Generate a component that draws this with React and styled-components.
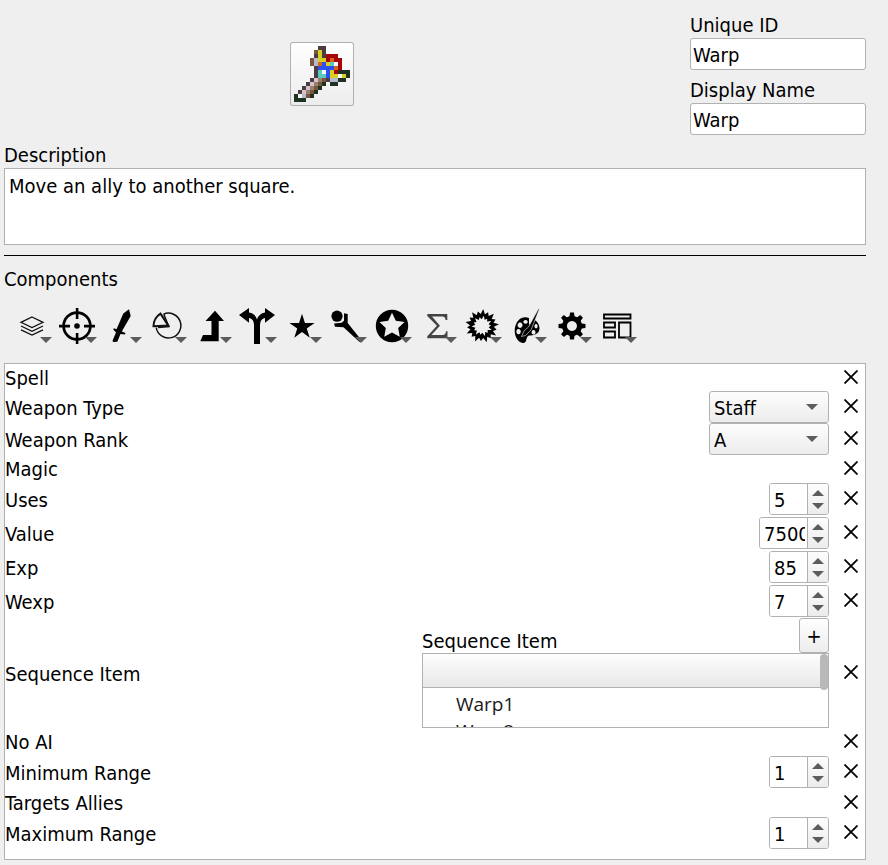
import React, { useState } from "react";
import styled, { createGlobalStyle } from "styled-components";

const GlobalStyle = createGlobalStyle`
  * { box-sizing: border-box; }
  body {
    margin: 0;
    background: #efefef;
    color: #000;
    font: 20px/25px "DejaVu Sans Condensed", "DejaVu Sans", sans-serif;
  }
  button, input, select, textarea { font: inherit; color: inherit; }
`;

const Page = styled.main`
  padding: 13px 22px 5px 4px;
`;

const Header = styled.header`
  display: grid;
  grid-template-columns: 1fr 176px;
  column-gap: 50px;
  align-items: start;
`;

const SpriteButton = styled.button`
  justify-self: center;
  width: 64px;
  height: 64px;
  margin-top: 29px;
  padding: 0;
  border: 0;
  border-radius: 3px;
  box-shadow: inset 0 0 0 1px #b1b1b1;
  background: linear-gradient(#fff, #ececec);
  svg { display: block; width: 100%; height: 100%; }
`;

const Names = styled.div`
  display: flex;
  flex-direction: column;
  gap: 8px;
`;

const Field = styled.label`
  display: block;
  margin-top: ${(p) => (p.$spaced ? "8px" : "0")};
`;

const TextInput = styled.input`
  display: block;
  width: 100%;
  height: 32px;
  padding: 2px 2px 0;
  border: 1px solid #b1b1b1;
  border-radius: 3px;
  background: #fff;
`;

const TextArea = styled.textarea`
  display: block;
  width: 100%;
  height: 77px;
  padding: 5px 4px;
  border: 1px solid #b1b1b1;
  background: #fff;
  resize: none;
`;

const Divider = styled.hr`
  height: 1px;
  margin: 10px 0 11px;
  border: 0;
  background: #000;
`;

const Heading = styled.h2`
  margin: 0;
  font-size: 20px;
  font-weight: 400;
`;

const Toolbar = styled.div`
  display: flex;
  padding: 7px 6px 10px;
`;

const ToolButton = styled.button`
  position: relative;
  width: 45px;
  height: 54px;
  padding: 0 5px 0 4px;
  border: 0;
  background: none;
  svg { display: block; }
`;

const ToolCaret = styled.span`
  position: absolute;
  right: 3px;
  bottom: 10px;
  border: solid transparent;
  border-width: 6px 6px 0;
  border-top-color: #5c5c5c;
`;

const List = styled.ul`
  margin: 0;
  padding: 0 0 9px;
  border: 1px solid #b1b1b1;
  background: #fff;
  list-style: none;
`;

const Row = styled.li`
  display: flex;
  align-items: center;
  min-height: ${(p) => p.$height}px;
`;

const RowLabel = styled.label`
  flex: 1;
  padding-top: 2px;
`;

const RemoveButton = styled.button`
  display: grid;
  place-items: center;
  width: 28px;
  height: 26px;
  margin-left: 8px;
  padding: 0 0 2px;
  border: 0;
  background: none;
`;

const SelectBox = styled.span`
  position: relative;
  width: 120px;
  height: 32px;
`;

const Select = styled.select`
  width: 100%;
  height: 100%;
  padding: 2px 4px 0;
  border: 1px solid #b1b1b1;
  border-radius: 3px;
  background: linear-gradient(#fdfdfd, #ececec);
  appearance: none;
`;

const SelectCaret = styled.span`
  position: absolute;
  top: 13px;
  right: 11px;
  border: solid transparent;
  border-width: 6px 6px 0;
  border-top-color: #5c5c5c;
  pointer-events: none;
`;

const SpinBox = styled.span`
  display: flex;
  width: ${(p) => (p.$wide ? "70px" : "60px")};
  height: 32px;
  overflow: hidden;
  border: 1px solid #b1b1b1;
  border-radius: 3px;
`;

const SpinInput = styled.input`
  flex: 1;
  min-width: 0;
  height: 30px;
  margin-right: 2px;
  padding: 2px 0 0 4px;
  border: 0;
  background: #fff;
`;

const SpinButtons = styled.span`
  display: flex;
  flex-direction: column;
  justify-content: center;
  gap: 1px;
  width: 21px;
  padding-right: 1px;
  border-left: 1px solid #b1b1b1;
  background: linear-gradient(#fdfdfd, #ececec);
`;

const SpinButton = styled.button`
  display: grid;
  place-items: center;
  height: 12px;
  padding: 0;
  border: 0;
  background: none;
`;

const Sequence = styled.section`
  flex: 0 1 407px;
`;

const SequenceHead = styled.div`
  display: flex;
  justify-content: space-between;
  align-items: flex-end;
`;

const AddButton = styled.button`
  width: 30px;
  height: 35px;
  padding: 2px 0 0;
  border: 1px solid #b1b1b1;
  border-radius: 3px;
  background: linear-gradient(#fff, #ececec);
`;

const SequenceTitle = styled.span`
  line-height: 23px;
`;

const SequenceList = styled.div`
  position: relative;
  height: 75px;
  overflow: hidden;
  border: 1px solid #b1b1b1;
`;

const SequenceHeader = styled.div`
  height: 34px;
  margin-bottom: 3px;
  border-bottom: 1px solid #b1b1b1;
  background: linear-gradient(#fdfdfd, #e8e8e8);
`;

const SequenceEntry = styled.div`
  padding-left: 33px;
  color: #1a1a1a;
  font: 19px/27px "Open Sans", "Noto Sans", sans-serif;
`;

const ScrollThumb = styled.span`
  position: absolute;
  top: 0;
  right: 0;
  width: 8px;
  height: 36px;
  border-radius: 4px;
  background: #b9b9b9;
`;

const spriteColors = {
  d: "#4c3d45", b: "#7a5638", y: "#d6cf22", r: "#a80508", l: "#b6b9d0",
  o: "#d2661c", u: "#2f50f0", c: "#5cc8c0", w: "#f6fafa", g: "#1e3122",
  p: "#d8c4c4", t: "#9a7f74",
};
const spriteRows = [
  "                ",
  "       dd       ",
  "      byd       ",
  "      dydrrr    ",
  "     blyyrorr   ",
  "     blouycwr   ",
  "      duuuuor   ",
  "      dcwuyrggg ",
  "      dccuyywyg ",
  "     dptbdllgg  ",
  "    dptbg gg    ",
  "   dptbg        ",
  "  dptbg         ",
  " gwlbg          ",
  " ggg            ",
  "                ",
];

const Sprite = () => (
  <svg viewBox="0 0 16 16" shapeRendering="crispEdges" aria-hidden="true">
    {spriteRows.flatMap((row, y) =>
      [...row].map((c, x) =>
        c === " " ? null : <rect key={`${x}-${y}`} x={x} y={y} width="1" height="1" fill={spriteColors[c]} />
      )
    )}
  </svg>
);

const radial = (count, outer, inner, start = -90, shortOuter = outer) =>
  Array.from({ length: count * 2 }, (_, i) => {
    const r = i % 2 ? inner : i % 4 ? shortOuter : outer;
    const a = ((start + (i * 180) / count) * Math.PI) / 180;
    return `${(18 + r * Math.cos(a)).toFixed(2)},${(18 + r * Math.sin(a)).toFixed(2)}`;
  }).join(" ");

const tools = [
  ["Base", <g fill="none" stroke="#111" strokeWidth="1.3"><path d="M18 9 29 14.3 18 19.6 7 14.3Z" /><path d="m7 18 11 5.3L29 18M7 21.800l11 5.300 11-5.300" /></g>],
  ["Target", <g><circle cx="18" cy="18" r="13.400" fill="none" stroke="#000" strokeWidth="2.700" /><circle cx="18" cy="18" r="2.800" /><path d="M16.800 0h2.600v11h-2.600zM16.800 25h2.600v11h-2.600zM0 16.800h11v2.600H0zM25 16.800h11v2.600H25z" /></g>],
  ["Weapon", <path d="M25 1.300 26.700 8 17.800 23.500 21.500 25 21 26.500 16.500 26 13.300 33.800 9 34 8.600 32.500 12 24.500 9.300 21.500 9.800 20.300 12.500 21.300 19.300 5.500Z" />],
  ["Uses", <g fill="none" stroke="#111" strokeWidth="1.500"><path d="M14.500 6.200A12.400 12.400 0 1 1 7.200 19.500" /><path strokeWidth="2" d="M11.500 5.600 19.300 17.600 4.500 18.300Q4.600 10 11.500 5.600Z" /><path d="m14.800 6.200 5 12.300L9 19.500" /></g>],
  ["Experience", <path d="M21 2.700 30 13h-5.300v20.300H6.300L9 27h8.500V13h-6Z" />],
  ["Extra", <path d="M0 7 10 0v4.600Q16 5.500 18 11.500 20 5.500 26 4.600V0l10 7-10 7.700V10q-5 .8-5 7v19h-6V17q0-6.200-5-7v4.700Z" />],
  ["Special", <polygon points={radial(5, 13.200, 5)} transform="translate(0 1)" />],
  ["Formula", <g><circle cx="8" cy="8.200" r="5.600" /><path d="m15 5.300 3.700.7v9l14 17.500-2.200 1.600-16-14.800-8.500-.6-1-3.200 7.700-.8 2.300-2Z" /></g>],
  ["Status", <g><circle cx="18" cy="18" r="16.200" /><polygon points={radial(5, 13.200, 6.500)} fill="#efefef" /></g>],
  ["Sum", <path fill="#444" d="M8.300 6h20v6h-1.700q-.3-3.600-3-3.600H13l8 9.400-8.600 9.200h11.200q3.200 0 3.400-3.700h1.500v7H8.300v-2l9.600-10.500L8.300 8Z" />],
  ["Burst", <path fillRule="evenodd" d={`M${radial(18, 17, 12, -86, 15)}Z M${radial(14, 10.500, 6.800, -80, 9)}Z`} />],
  ["Aesthetic", <g><path fillRule="evenodd" d="M20 10C12 7 5.700 14 5.700 23c0 6 3.500 11.500 8 12 5 .3 2.500-6.500 6.500-7.500 4 0 10-1 10.300-7 .2-4-3-8-5.500-8.700L20 17Zm-9 4.500a2.500 2.700 0 1 0 .1 0Zm5.500-2.500a2.200 1.900 0 1 0 .1 0ZM9.500 21a2.200 2.600 0 1 0 .1 0ZM24.500 22a2 2.300 0 1 0 .1 0ZM27 16a1.600 2.200 0 1 0 .1 0Z" /><path stroke="#efefef" strokeWidth=".6" d="M29.500.8 30.300 1.200 22 22l-5.500 5.500-4 1 2.500-5.500 4.500-4Z" /></g>],
  ["Settings", <g><path fillRule="evenodd" d="M18 8a10 10 0 1 0 .1 0Zm0 5a5 5 0 1 1-.1 0Z" />{[0, 45, 90, 135, 180, 225, 270, 315].map((a) => <path key={a} d="M15.300 10l.7-5.500h4l.7 5.500Z" transform={`rotate(${a} 18 18)`} />)}</g>],
  ["Layout", <path fill="none" stroke="#000" strokeWidth="1.800" d="M5 6.500h26.500V10.500H5zM5 14.500h11V19.500H5zM5 23.500h11V29.500H5zM20 14.500h11.500V29.500H20z" />],
];

const Triangle = ({ up }) => (
  <svg width="12" height="6" viewBox="0 0 12 6" fill="#5c5c5c" aria-hidden="true">
    <path d={up ? "M0 6 6 0l6 6Z" : "M0 0h12L6 6Z"} />
  </svg>
);

const Remove = ({ name }) => (
  <RemoveButton type="button" aria-label={`Remove ${name}`}>
    <svg width="14" height="14" viewBox="0 0 14 14" stroke="#000" strokeWidth="1.800" aria-hidden="true">
      <path d="m.5.5 13 13M13.500.5l-13 13" />
    </svg>
  </RemoveButton>
);

function Spinner({ id, initial }) {
  const [value, setValue] = useState(initial);
  const step = (n) => setValue((v) => String((Number(v) || 0) + n));
  return (
    <SpinBox $wide={initial.length > 3}>
      <SpinInput id={id} inputMode="numeric" value={value} onChange={(e) => setValue(e.target.value)} />
      <SpinButtons>
        <SpinButton type="button" aria-label="Increase" onClick={() => step(1)}><Triangle up /></SpinButton>
        <SpinButton type="button" aria-label="Decrease" onClick={() => step(-1)}><Triangle /></SpinButton>
      </SpinButtons>
    </SpinBox>
  );
}

const Dropdown = ({ id, options }) => (
  <SelectBox>
    <Select id={id}>{options.map((o) => <option key={o}>{o}</option>)}</Select>
    <SelectCaret />
  </SelectBox>
);

const SequenceEditor = () => (
  <Sequence>
    <SequenceHead>
      <SequenceTitle>Sequence Item</SequenceTitle>
      <AddButton type="button" aria-label="Add sequence item">+</AddButton>
    </SequenceHead>
    <SequenceList>
      <SequenceHeader />
      <SequenceEntry>Warp1</SequenceEntry>
      <SequenceEntry>Warp2</SequenceEntry>
      <ScrollThumb />
    </SequenceList>
  </Sequence>
);

const components = [
  { name: "Spell" },
  { name: "Weapon Type", options: ["Staff", "Sword", "Lance", "Axe"] },
  { name: "Weapon Rank", options: ["A", "B", "C", "D", "E"] },
  { name: "Magic" },
  { name: "Uses", value: "5" },
  { name: "Value", value: "7500" },
  { name: "Exp", value: "85" },
  { name: "Wexp", value: "7" },
  { name: "Sequence Item", sequence: true },
  { name: "No AI" },
  { name: "Minimum Range", value: "1" },
  { name: "Targets Allies" },
  { name: "Maximum Range", value: "1" },
];

function ComponentRow({ name, options, value, sequence }) {
  const id = name.toLowerCase().replace(/ /g, "-");
  const editable = options || value;
  return (
    <Row $height={options ? 32 : value ? 34 : 27}>
      <RowLabel as={editable ? "label" : "span"} htmlFor={editable ? id : undefined}>{name}</RowLabel>
      {options && <Dropdown id={id} options={options} />}
      {value && <Spinner id={id} initial={value} />}
      {sequence && <SequenceEditor />}
      <Remove name={name} />
    </Row>
  );
}

export default function App() {
  return (
    <Page>
      <GlobalStyle />
      <Header>
        <SpriteButton type="button" aria-label="Choose icon"><Sprite /></SpriteButton>
        <Names>
          <Field>Unique ID<TextInput defaultValue="Warp" /></Field>
          <Field>Display Name<TextInput defaultValue="Warp" /></Field>
        </Names>
      </Header>
      <Field $spaced>Description<TextArea defaultValue="Move an ally to another square." /></Field>
      <Divider />
      <Heading>Components</Heading>
      <Toolbar role="toolbar" aria-label="Component types">
        {tools.map(([name, drawing]) => (
          <ToolButton key={name} type="button" aria-label={name}>
            <svg width="36" height="36" viewBox="0 0 36 36" aria-hidden="true">{drawing}</svg>
            <ToolCaret />
          </ToolButton>
        ))}
      </Toolbar>
      <List>
        {components.map((c) => <ComponentRow key={c.name} {...c} />)}
      </List>
    </Page>
  );
}
